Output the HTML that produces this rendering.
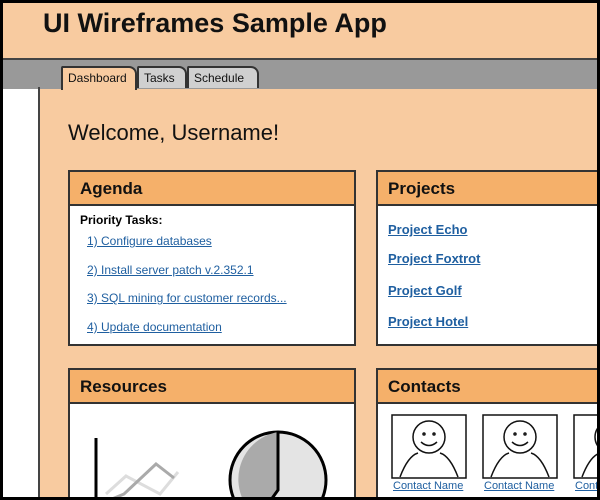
<!DOCTYPE html>
<html><head><style>
*{margin:0;padding:0;box-sizing:border-box}
html,body{width:600px;height:500px;overflow:hidden}
body{background:#000;font-family:"Liberation Sans",sans-serif}
#w{position:relative;width:600px;height:500px;overflow:hidden}
.a{position:absolute}
.frame{left:3px;top:3px;width:594px;height:494px;background:#f8cba0;overflow:hidden}
a{color:#1f5fa0;text-decoration:underline}
.panel{position:absolute;border:2px solid #333;background:#fff;overflow:hidden}
.ph{background:#f5b06a;border-bottom:2px solid #333;height:34px;font-weight:bold;font-size:17px;padding:7px 10px;color:#111}
.tab{position:absolute;top:66px;height:22px;border:2px solid #333;border-bottom:none;font-size:12px;padding:3px 5px;background:#d0d0d0;color:#111;border-radius:2px 8px 0 0}
.l{position:absolute;font-size:12px;white-space:nowrap}
.pl{position:absolute;font-size:13px;font-weight:bold;left:10px}
</style></head><body><div id="w">
<div class="a frame">
 <div class="a" style="left:40px;top:5px;font-size:27px;font-weight:bold;color:#111">UI Wireframes Sample App</div>
 <div class="a" style="left:0;top:55px;width:594px;height:2px;background:#444"></div>
 <div class="a" style="left:0;top:57px;width:594px;height:29px;background:#999"></div>
 <div class="a" style="left:0;top:86px;width:35px;height:408px;background:#fff"></div>
 <div class="a" style="left:35px;top:84px;width:2px;height:410px;background:#444"></div>
 <div class="a" style="left:37px;top:86px;width:557px;height:408px;background:#f8cba0"></div>
</div>
<div class="tab" style="left:137px;width:50px">Tasks</div>
<div class="tab" style="left:187px;width:72px">Schedule</div>
<div class="tab" style="left:61px;width:76px;background:#f8cba0;height:24px;top:66px">Dashboard</div>
<div class="a" style="left:68px;top:120px;font-size:22px;color:#111">Welcome, Username!</div>

<div class="panel" style="left:68px;top:170px;width:288px;height:176px">
 <div class="ph">Agenda</div>
 <div class="l" style="left:10px;top:41px;font-weight:bold">Priority Tasks:</div>
 <a class="l" style="left:17px;top:62px">1) Configure databases</a>
 <a class="l" style="left:17px;top:91px">2) Install server patch v.2.352.1</a>
 <a class="l" style="left:17px;top:119px">3) SQL mining for customer records...</a>
 <a class="l" style="left:17px;top:148px">4) Update documentation</a>
</div>
<div class="panel" style="left:376px;top:170px;width:221px;height:176px;border-right:none">
 <div class="ph">Projects</div>
 <a class="pl" style="top:50px">Project Echo</a>
 <a class="pl" style="top:79px">Project Foxtrot</a>
 <a class="pl" style="top:111px">Project Golf</a>
 <a class="pl" style="top:142px">Project Hotel</a>
</div>
<div class="panel" style="left:68px;top:368px;width:288px;height:129px;border-bottom:none">
 <div class="ph">Resources</div>
 <svg class="a" style="left:0;top:34px" width="284" height="93">
  <line x1="26" y1="34" x2="26" y2="100" stroke="#000" stroke-width="3"/>
  <polyline points="36,90 56,72 90,90 108,68" fill="none" stroke="#ddd" stroke-width="3"/>
  <polyline points="30,100 54,90 86,60 104,74" fill="none" stroke="#aaa" stroke-width="3"/>
  <circle cx="208" cy="76" r="48" fill="#e4e4e4" stroke="#000" stroke-width="3"/>
  <path d="M208 28 L208 86 L188 114 A48 48 0 0 1 208 28Z" fill="#aaa"/>
  <path d="M208 28 L208 86 L188 114" fill="none" stroke="#000" stroke-width="3"/>
 </svg>
</div>
<div class="panel" style="left:376px;top:368px;width:221px;height:129px;border-bottom:none;border-right:none">
 <div class="ph">Contacts</div>
 <svg class="a" style="left:0;top:34px" width="221" height="80">
  <g id="p" fill="none" stroke="#111" stroke-width="1.5">
   <rect x="14" y="11" width="74" height="63"/>
   <circle cx="51" cy="33" r="16"/>
   <circle cx="46" cy="30" r="1"/><circle cx="56" cy="30" r="1"/>
   <path d="M43 38 Q51 45 59 38"/>
   <path d="M22 73 Q30 52 40 49 M62 49 Q72 52 80 73"/>
  </g>
  <use href="#p" x="91"/><use href="#p" x="182"/>
 </svg>
 <a class="l" style="left:15px;top:110px;font-size:11px">Contact Name</a>
 <a class="l" style="left:106px;top:110px;font-size:11px">Contact Name</a>
 <a class="l" style="left:197px;top:110px;font-size:11px">Contact Name</a>
</div>
</div></body></html>
